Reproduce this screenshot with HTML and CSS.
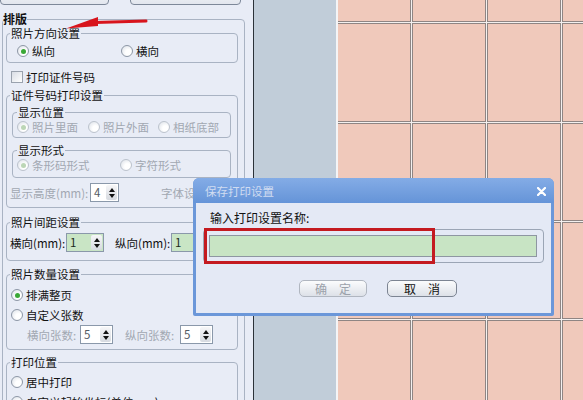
FILE: index.html
```html
<!DOCTYPE html>
<html lang="zh">
<head>
<meta charset="utf-8">
<link rel="stylesheet" href="styles.css">
</head>
<body>
<div class="app">
  <aside class="panel">
    <div class="top-btns">
      <button class="tbtn tb1">导入打印设置</button>
      <button class="tbtn tb2">保存打印设置</button>
    </div>
    <fieldset class="grp outer">
      <legend class="lg-bold">排版</legend>

      <fieldset class="grp g-orient">
        <legend>照片方向设置</legend>
        <div class="row pl10">
          <label class="opt w104"><span class="radio on"></span>纵向</label>
          <label class="opt"><span class="radio"></span>横向</label>
        </div>
      </fieldset>

      <div class="row chk-row"><span class="check"></span>打印证件号码</div>

      <fieldset class="grp g-id">
        <legend>证件号码打印设置</legend>
        <fieldset class="grp sub g-pos">
          <legend>显示位置</legend>
          <div class="row pl4 dis">
            <label class="opt w71"><span class="radio on off"></span>照片里面</label>
            <label class="opt w70"><span class="radio off"></span>照片外面</label>
            <label class="opt"><span class="radio off"></span>相纸底部</label>
          </div>
        </fieldset>
        <fieldset class="grp sub g-form">
          <legend>显示形式</legend>
          <div class="row pl4 dis">
            <label class="opt w103"><span class="radio on off"></span>条形码形式</label>
            <label class="opt"><span class="radio off"></span>字符形式</label>
          </div>
        </fieldset>
        <div class="row srow pl3 mt5 dis">
          <span class="lb w80">显示高度(mm):</span>
          <span class="spin w29"><span class="v">4</span><span class="ar"><i class="up"></i><i class="dn"></i></span></span>
          <span class="lb ml42">字体设置</span>
        </div>
      </fieldset>

      <fieldset class="grp g-space">
        <legend>照片间距设置</legend>
        <div class="row srow pl3">
          <span class="lb w56">横向(mm):</span>
          <span class="spin green w38"><span class="v">1</span><span class="ar"><i class="up"></i><i class="dn"></i></span></span>
          <span class="lb w56 ml11">纵向(mm):</span>
          <span class="spin green w38"><span class="v">1</span><span class="ar"><i class="up"></i><i class="dn"></i></span></span>
        </div>
      </fieldset>

      <fieldset class="grp g-count">
        <legend>照片数量设置</legend>
        <div class="row pl4">
          <label class="opt"><span class="radio on"></span>排满整页</label>
        </div>
        <div class="row pl4 mt6">
          <label class="opt"><span class="radio"></span>自定义张数</label>
        </div>
        <div class="row srow pl20 mt3 dis">
          <span class="lb w53">横向张数:</span>
          <span class="spin w33"><span class="v">5</span><span class="ar"><i class="up"></i><i class="dn"></i></span></span>
          <span class="lb w55 ml12">纵向张数:</span>
          <span class="spin w33"><span class="v">5</span><span class="ar"><i class="up"></i><i class="dn"></i></span></span>
        </div>
      </fieldset>

      <fieldset class="grp g-print">
        <legend>打印位置</legend>
        <div class="row pl4">
          <label class="opt"><span class="radio"></span>居中打印</label>
        </div>
        <div class="row pl4 mt6">
          <label class="opt"><span class="radio"></span>自定义起始坐标(单位mm)</label>
        </div>
      </fieldset>
    </fieldset>
  </aside>

  <main class="work">
    <div class="paper">
      <div class="cell"></div><div class="cell"></div><div class="cell"></div><div class="cell"></div>
      <div class="cell"></div><div class="cell"></div><div class="cell"></div><div class="cell"></div>
      <div class="cell"></div><div class="cell"></div><div class="cell"></div><div class="cell"></div>
      <div class="cell"></div><div class="cell"></div><div class="cell"></div><div class="cell"></div>
      <div class="cell"></div><div class="cell"></div><div class="cell"></div><div class="cell"></div>
    </div>
  </main>

  <svg class="arrow" width="160" height="40" viewBox="0 0 160 40">
    <line x1="95" y1="22.5" x2="146" y2="21" stroke="#d8141c" stroke-width="3" stroke-linecap="round"/>
    <polygon points="66,28.5 98,17 98,26" fill="#d8141c"/>
  </svg>

  <div class="dialog">
    <div class="titlebar">
      <span class="ttl">保存打印设置</span>
      <svg class="close" width="9" height="9" viewBox="0 0 9 9"><path d="M1 1L8 8M8 1L1 8" stroke="#fff" stroke-width="2.2" stroke-linecap="round"/></svg>
    </div>
    <div class="dbody">
      <div class="dlabel">输入打印设置名称:</div>
      <div class="frame"><div class="input"></div></div>
      <div class="dbtns">
        <button class="dbtn off w68">确&emsp;定</button>
        <button class="dbtn w70">取&emsp;消</button>
      </div>
    </div>
    <div class="mark"></div>
  </div>
</div>
</body>
</html>
```

FILE: styles.css
```css
* { box-sizing: border-box; }
html, body { margin: 0; padding: 0; }
body {
  width: 583px;
  height: 400px;
  overflow: hidden;
  font-family: "Noto Sans CJK SC", "Noto Sans", sans-serif;
  font-size: 11.5px;
  color: #111;
  background: #c1cdd9;
}
.app {
  position: relative;
  display: flex;
  width: 583px;
  height: 400px;
  overflow: hidden;
}

/* ---------- left settings panel ---------- */
.panel {
  width: 254px;
  flex: none;
  height: 400px;
  overflow: hidden;
  background: #e8ecf6;
  border-right: 1px solid #2b3138;
}
.top-btns {
  display: flex;
  height: 22px;
  margin-top: -17px;
}
.tbtn {
  font: inherit;
  height: 22px;
  padding: 0;
  border: 1px solid #7d8899;
  border-radius: 4px;
  background: linear-gradient(#fdfdfe, #e2e6ee);
  color: #111;
  line-height: 20px;
}
.tb1 { width: 109px; }
.tb2 { width: 111px; margin-left: 21px; }

.grp {
  margin: 0;
  padding: 0;
  border: 1px solid #a9b3c3;
  border-radius: 4px;
  min-width: 0;
}
.grp > legend {
  padding: 0 1px;
  margin-left: 3px;
  height: 12px;
  line-height: 12px;
  white-space: nowrap;
}
.outer {
  margin: 8px 0 0 2px;
  width: 243px;
  padding: 0 0 20px;
}
.outer > legend.lg-bold {
  margin-left: 0;
  padding: 0;
  font-weight: bold;
  font-size: 12px;
}
.g-orient { margin: 2px 6px 0 3px; padding: 5px 0 4px; }
.g-id { margin: 5px 6px 0 3px; padding: 0 0 5px; }
.sub { margin: 5px 6px 0 5px; }
.sub > legend { margin-left: 4px; }
.g-pos { padding: 2px 0 3px; }
.g-form { margin-top: 6px; padding: 2px 0 5px; }
.g-space { margin: 8px 6px 0 3px; padding: 5px 0 8px; }
.g-count { margin: 7px 6px 0 3px; padding: 8px 0 5px; }
.g-print { margin: 6px 6px 0 3px; padding: 7px 0 5px; }

.row {
  display: flex;
  align-items: center;
  height: 14px;
  white-space: nowrap;
}
.srow { height: 19px; }
.pl3 { padding-left: 3px; }
.pl4 { padding-left: 4px; }
.pl10 { padding-left: 10px; }
.pl20 { padding-left: 20px; }
.mt3 { margin-top: 3px; }
.mt5 { margin-top: 5px; }
.mt6 { margin-top: 6px; }
.chk-row { margin-top: 7px; padding-left: 8px; }

.opt { display: flex; align-items: center; flex: none; }
.w104 { width: 104px; }
.w103 { width: 103px; }
.w71 { width: 71px; }
.w70 { width: 70px; }
.w68 { width: 68px; }
.w80 { width: 80px; }
.w56 { width: 56px; }
.w55 { width: 55px; }
.w53 { width: 53px; }
.w38 { width: 38px; }
.w33 { width: 33px; }
.w29 { width: 29px; }
.ml11 { margin-left: 11px; }
.ml12 { margin-left: 12px; }
.ml42 { margin-left: 42px; }
.lb { display: inline-block; flex: none; }

.dis { color: #a2a8b2; }

.radio {
  position: relative;
  width: 12px;
  height: 12px;
  flex: none;
  margin-right: 3px;
  border-radius: 50%;
  border: 1px solid #8d97a6;
  background: radial-gradient(circle at 65% 65%, #ffffff 30%, #d9dee6 100%);
}
.radio.on::after {
  content: "";
  position: absolute;
  left: 2.5px;
  top: 2.5px;
  width: 5px;
  height: 5px;
  border-radius: 50%;
  background: #3aa836;
}
.radio.off { border-color: #bcc3cd; }
.radio.on.off::after { background: #bcd6b6; }

.check {
  width: 12px;
  height: 12px;
  flex: none;
  margin-right: 3px;
  border: 1px solid #9aa2ae;
  background: linear-gradient(135deg, #d9dde5, #ffffff);
}

.spin {
  display: inline-flex;
  flex: none;
  height: 19px;
  border: 1px solid #8a98aa;
  background: #fff;
  color: #555b63;
}
.spin.green { background: #c9e5c5; color: #1c2a1c; }
.spin .v {
  flex: 1;
  padding-left: 3px;
  line-height: 17px;
}
.spin .ar {
  width: 11px;
  margin: 1px;
  display: flex;
  flex-direction: column;
  align-items: center;
  justify-content: center;
  gap: 2px;
  border-radius: 2px;
  background: linear-gradient(#f6f6f8, #d6dae0);
}
.up {
  width: 0; height: 0;
  border-left: 3.5px solid transparent;
  border-right: 3.5px solid transparent;
  border-bottom: 4px solid #111;
}
.dn {
  width: 0; height: 0;
  border-left: 3.5px solid transparent;
  border-right: 3.5px solid transparent;
  border-top: 4px solid #111;
}

/* ---------- work area / paper grid ---------- */
.work {
  flex: 1;
  min-width: 0;
  height: 400px;
  overflow: hidden;
  background: #c1cdd9;
  padding-left: 82px;
}
.paper {
  display: grid;
  width: 300px;
  height: 420px;
  grid-template-columns: 73px 74px 74px 74px;
  grid-template-rows: 22px 99px 98px 97px 98px;
  gap: 1px;
  background: #f4f0ef;
  border-left: 2px solid #f4f4f6;
}
.cell {
  background: #f0c9bb;
  border: 1px solid #8f8583;
}
.cell:nth-child(-n+4) { border-top: none; }
.cell:nth-child(4n+1) { border-left: none; }

/* ---------- annotation arrow ---------- */
.arrow {
  position: absolute;
  left: 0;
  top: 0;
}

/* ---------- dialog ---------- */
.dialog {
  position: absolute;
  left: 193px;
  top: 178px;
  width: 361px;
  height: 138px;
  display: flex;
  flex-direction: column;
  padding: 0 3px 3px;
  border-radius: 6px 6px 2px 2px;
  background: #6b97d9;
}
.titlebar {
  display: flex;
  align-items: center;
  height: 25px;
  margin: 0 -3px;
  padding: 1px 0 0 12px;
  border-radius: 6px 6px 0 0;
  background: linear-gradient(#84ace6, #6594d8);
}
.ttl {
  color: #d0dcf1;
  font-size: 11.5px;
}
.close { margin-left: auto; margin-right: 8px; }
.dbody {
  flex: 1;
  background: #e4e9f5;
}
.dlabel {
  margin: 9px 0 0 14px;
  height: 12px;
  line-height: 12px;
  font-size: 12px;
}
.frame {
  margin: 5px 7px 0 7px;
  padding: 5px 6px 5px 5px;
  border: 1px solid #9ba5b5;
  border-radius: 4px;
}
.input {
  height: 22px;
  border: 1px solid #8e96a2;
  background: #c8e4c4;
}
.dbtns {
  display: flex;
  gap: 20px;
  margin-top: 17px;
  padding-left: 103px;
}
.dbtn {
  font: inherit;
  font-size: 12px;
  height: 17px;
  padding: 0;
  line-height: 15px;
  border: 1px solid #7c8492;
  border-radius: 5px;
  background: linear-gradient(#fbfcfd, #dde1e8);
  color: #111;
}
.dbtn.off { color: #9ba1aa; border-color: #b0b6c0; }
.mark {
  position: absolute;
  left: 11px;
  top: 50px;
  width: 231px;
  height: 36px;
  border: 3px solid #c41a20;
}
```
